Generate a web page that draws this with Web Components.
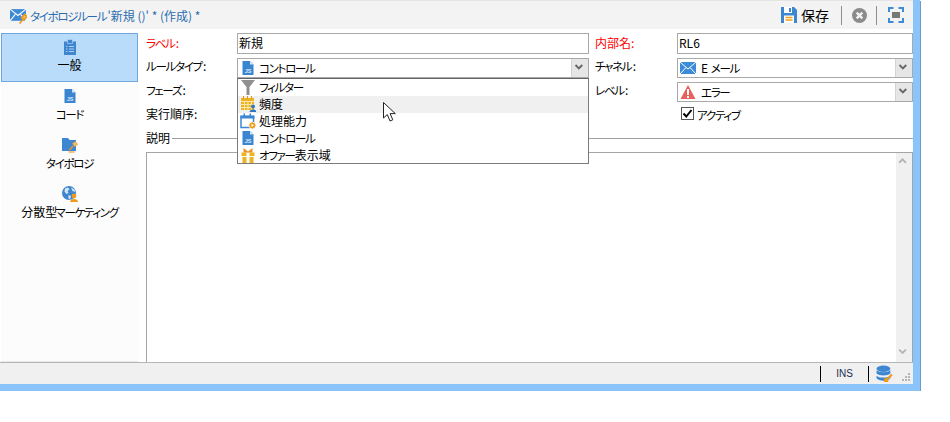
<!DOCTYPE html>
<html lang="ja">
<head>
<meta charset="utf-8">
<title>タイポロジルール</title>
<style>
	html, body { margin: 0; background: #fff; }
	body { font: 12px "Noto Sans CJK JP", "Liberation Sans", sans-serif; color: #000; }
</style>
</head>
<body>

<template id="app-window">
	<style>
		:host {
			display: block;
			width: 913px;
			height: 384px;
			border-right: 7px solid #8ac4fb;
			border-bottom: 7px solid #8ac4fb;
			box-shadow: 1px 1px 0 #6a9cc8;
			background: #fff;
		}
		.wrap { display: flex; flex-direction: column; height: 100%; }
		.body { flex: 1; display: flex; min-height: 0; padding-top: 4px; box-sizing: border-box; }
	</style>
	<div class="wrap">
		<slot name="title"></slot>
		<div class="body"><slot name="side"></slot><slot name="main"></slot></div>
		<slot name="status"></slot>
	</div>
</template>

<template id="app-titlebar">
	<style>
		:host {
			display: flex;
			align-items: center;
			height: 29px;
			padding: 0 9px 0 10px;
			box-sizing: border-box;
			border-top: 1px solid #e4e4e4;
			background: #f3f3f3;
		}
		.title { margin-left: 3px; color: #2b6cb0; font-size: 12px; white-space: nowrap; }
		.tools { margin-left: auto; display: flex; align-items: center; }
		.save { font-size: 14px; margin-left: 4px; }
		.sep { width: 1px; height: 19px; background: #8f8f8f; }
		.s1 { margin: 0 10px 0 12px; }
		.s2 { margin: 0 11px 0 9px; }
	</style>
	<app-icon name="mailrule" size="17"></app-icon>
	<span class="title"><slot></slot></span>
	<div class="tools">
		<app-icon name="save" size="16"></app-icon>
		<span class="save">保存</span>
		<span class="sep s1"></span>
		<app-icon name="cancel" size="15"></app-icon>
		<span class="sep s2"></span>
		<app-icon name="full" size="16"></app-icon>
	</div>
</template>

<template id="app-sidebar">
	<style>
		:host {
			display: block;
			width: 137px;
			margin-left: 1px;
			background: #fcfcfc;
			border-bottom: 1px solid #e6e9ee;
			box-sizing: border-box;
		}
	</style>
	<slot></slot>
</template>

<template id="app-navitem">
	<style>
		:host {
			display: flex;
			flex-direction: column;
			align-items: center;
			height: 49px;
			padding-top: 5px;
			box-sizing: border-box;
			font-size: 12px;
			line-height: 16px;
			gap: 2px;
			border: 1px solid transparent;
			white-space: nowrap;
		}
		:host([active]) { background: #b9dcfb; border-color: #6ea8dc; }
	</style>
	<app-icon></app-icon>
	<span><slot></slot></span>
</template>

<template id="app-form">
	<style>
		:host {
			display: flex;
			flex-direction: column;
			flex: 1;
			min-width: 0;
			margin-left: 8px;
			position: relative;
		}
		.grid {
			display: grid;
			grid-template-columns: 91px 352px 88px 236px;
			grid-template-rows: 21px 20px 20px 18px;
			row-gap: 4px;
			align-items: center;
		}
		.desc { display: flex; align-items: center; height: 16px; margin-top: 6px; }
		.desc span { padding-right: 2px; margin-bottom: 2px; }
		.desc i { flex: 1; height: 1px; background: #a0a0a0; }
		.box {
			flex: 1;
			margin-top: 6px;
			display: flex;
			justify-content: flex-end;
			border: 1px solid #a5a5a5;
			border-bottom-width: 0;
			background: #fff;
		}
		.bar {
			width: 16px;
			display: flex;
			flex-direction: column;
			justify-content: space-between;
			align-items: center;
			background: #f0f0f0;
			padding: 3px 0;
			box-sizing: border-box;
		}
		.drop { position: absolute; left: 91px; top: 45px; }
	</style>
	<div class="grid"><slot></slot></div>
	<div class="desc"><span>説明</span><i></i></div>
	<div class="box">
		<div class="bar">
			<app-icon name="up" size="12"></app-icon>
			<app-icon name="downlight" size="12"></app-icon>
		</div>
	</div>
	<div class="drop"><slot name="drop"></slot></div>
</template>

<template id="app-label">
	<style>
		:host { display: block; font-size: 12px; line-height: 16px; white-space: nowrap; padding-bottom: 2px; }
		:host([req]) { color: #f00; }
	</style>
	<slot></slot>
</template>

<template id="app-input">
	<style>
		:host {
			display: flex;
			align-items: center;
			height: 21px;
			padding: 0 0 2px 1px;
			box-sizing: border-box;
			border: 1px solid #a9a9a9;
			background: #fff;
			font-size: 12px;
		}
	</style>
	<slot></slot>
</template>

<template id="app-combo">
	<style>
		:host {
			display: flex;
			align-items: center;
			height: 20px;
			box-sizing: border-box;
			border: 1px solid #a9a9a9;
			background: #fff;
			font-size: 12px;
		}
		app-icon { margin: 0 var(--icon-gap, 5px) 0 2px; }
		.text { flex: 1; margin-bottom: 2px; }
		.btn {
			width: 17px;
			height: 100%;
			display: flex;
			align-items: center;
			justify-content: center;
			background: #e6e6e6;
			border-left: 1px solid #d4d4d4;
			box-sizing: border-box;
		}
		.btn app-icon { margin: 0; }
	</style>
	<app-icon></app-icon>
	<span class="text"><slot></slot></span>
	<span class="btn"><app-icon name="down" size="12"></app-icon></span>
</template>

<template id="app-dropdown">
	<style>
		:host {
			display: block;
			width: 352px;
			box-sizing: border-box;
			border: 1px solid #7a7a7a;
			border-top-color: #646464;
			background: #fff;
			height: 86px;
			overflow: hidden;
		}
	</style>
	<slot></slot>
</template>

<template id="app-option">
	<style>
		:host {
			display: flex;
			align-items: center;
			height: 17px;
			box-sizing: border-box;
			padding-bottom: 2px;
			font-size: 12px;
		}
		:host([hover]) { background: #f0f0f0; }
		app-icon { margin: 0 3px 0 2px; }
	</style>
	<app-icon size="16"></app-icon>
	<slot></slot>
</template>

<template id="app-check">
	<style>
		:host { display: flex; align-items: center; margin-left: 4px; font-size: 12px; gap: 3px; }
		.b {
			width: 11px; height: 11px;
			border: 1px solid #555;
			display: flex;
			background: #fff;
			margin-bottom: 3px;
		}
		.t { margin-bottom: 2px; letter-spacing: -.3px; }
	</style>
	<span class="b"><svg width="11" height="11" viewBox="0 0 11 11"><path d="M1.5 5.5l2.8 3 5.2-6.5" fill="none" stroke="#000" stroke-width="2"/></svg></span>
	<span class="t"><slot></slot></span>
</template>

<template id="app-statusbar">
	<style>
		:host {
			display: flex;
			align-items: center;
			height: 22px;
			box-sizing: border-box;
			border-top: 1px solid #b5b5b5;
			background: #f0f0f0;
			position: relative;
			font-size: 10px;
		}
		.sep { width: 1px; height: 16px; background: #000; }
		.a { margin-left: 820px; }
		.ins { width: 47px; text-align: center; font-family: "Liberation Sans", sans-serif; color: #1a2f50; }
		app-icon { margin-left: 7px; }
		.grip { position: absolute; right: 2px; bottom: 2px; }
	</style>
	<span class="sep a"></span>
	<span class="ins"><slot></slot></span>
	<span class="sep"></span>
	<app-icon name="db" size="17"></app-icon>
	<svg class="grip" width="9" height="9" viewBox="0 0 9 9" fill="#b5b5b5"><rect x="6" y="0" width="2" height="2"/><rect x="3" y="3" width="2" height="2"/><rect x="6" y="3" width="2" height="2"/><rect x="0" y="6" width="2" height="2"/><rect x="3" y="6" width="2" height="2"/><rect x="6" y="6" width="2" height="2"/></svg>
</template>

<template id="k-t">
	<style>
		:host {
			font-size: 11.5px;
			font-feature-settings: "palt";
			letter-spacing: -1.3px;
		}
	</style>
	<slot></slot>
</template>

<app-window>
	<app-titlebar slot="title"><k-t>タイポロジルール</k-t> '新規 ()' * (作成) *</app-titlebar>
	<app-sidebar slot="side">
		<app-navitem active icon="clip">一般</app-navitem>
		<app-navitem icon="js"><k-t>コード</k-t></app-navitem>
		<app-navitem icon="folder"><k-t>タイポロジ</k-t></app-navitem>
		<app-navitem icon="globe">分散型<k-t style="margin-left:-3px">マーケティング</k-t></app-navitem>
	</app-sidebar>
	<app-form slot="main">
		<app-label req><k-t>ラベル</k-t>:</app-label>
		<app-input>新規</app-input>
		<app-label req style="margin-left:6px">内部名:</app-label>
		<app-input>RL6</app-input>

		<app-label style="margin-top:-3px"><k-t>ルールタイプ</k-t>:</app-label>
		<app-combo icon="js" style="--icon-gap:3px"><k-t>コントロール</k-t></app-combo>
		<app-label style="margin:-3px 0 0 6px"><k-t>チャネル</k-t>:</app-label>
		<app-combo icon="mail">E <k-t>メール</k-t></app-combo>

		<app-label style="margin-top:-2px"><k-t>フェーズ</k-t>:</app-label>
		<span></span>
		<app-label style="margin:-2px 0 0 6px"><k-t>レベル</k-t>:</app-label>
		<app-combo icon="warn"><k-t>エラー</k-t></app-combo>

		<app-label>実行順序:</app-label>
		<span></span>
		<span></span>
		<app-check><k-t>アクティブ</k-t></app-check>

		<app-dropdown slot="drop">
			<app-option icon="filter"><k-t>フィルター</k-t></app-option>
			<app-option icon="cal" hover>頻度</app-option>
			<app-option icon="capacity">処理能力</app-option>
			<app-option icon="js"><k-t>コントロール</k-t></app-option>
			<app-option icon="gift"><k-t>オファー</k-t>表示域</app-option>
		</app-dropdown>
	</app-form>
	<app-statusbar slot="status">INS</app-statusbar>
</app-window>

<svg id="cursor" width="16" height="22" viewBox="0 0 16 22" style="position:absolute;left:383px;top:102px">
	<path d="M.5.5v15.500l3.800-3.400 2.700 6.400 2.800-1.200-2.700-6.200h5.200z" fill="#fff" stroke="#222" stroke-width="1"/>
</svg>

<script>
	const ICONS = {
		js: '<path d="M2.500 1h7.500l3.500 3.500V15h-11z" fill="#3b84d0"/><path d="M10 1l3.500 3.500H10z" fill="#d5e6f6"/><text x="8" y="13" font-size="5.500" font-weight="700" font-family="Liberation Sans" text-anchor="middle" fill="#dcebf8">JS</text>',
		clip: '<path d="M2 2.500h12V16H2z" fill="#3f86cf"/><path d="M5.500 .5h5V4.500h-5z" fill="#3f86cf" stroke="#b9dcfb" stroke-width=".6"/><path d="M4 7.500h1.500M7 7.500h5M4 10h1.500M7 10h5M4 12.500h1.500M7 12.500h5" stroke="#a9d0f2" fill="none"/>',
		folder: '<path d="M0 1h6l1.500 2H14v11H0z" fill="#3d87d2"/><path d="M10.500 6.500l3-2 2 3-3 2z" fill="#f0c070" stroke="#e8932a" stroke-width=".7"/><path d="M11 9l-3.500 4" stroke="#e8932a" stroke-width="1.500"/><path d="M6.500 15h6" stroke="#f0b050" stroke-width="1.500"/>',
		globe: '<circle cx="7" cy="7" r="7" fill="#3f86cf"/><path d="M3 2.500l3-1 1.500 2-2 1.500 1 2-2 1-2-2.500zM9 1.500l3.500 2 .5 2.500-2.500-1zM6.500 9l2.500 1-1 3.500-1.500-1z" fill="#d6e7f7"/><circle cx="12" cy="10" r="2.400" fill="#ee9a1c"/><path d="M8 16c0-4 8-4 8 0z" fill="#ee9a1c"/>',
		mailrule: '<path d="M0 2h15v11H0z" fill="#3d8bd6"/><path d="M0 2l7.500 6L15 2M0 13l5-6M15 13l-5-6" fill="none" stroke="#fff"/><path d="M11 10l3-3 2 2-3 3zM12 12l-3 3.500" stroke="#ee9a1c" stroke-width="1.500" fill="#f0c070"/>',
		mail: '<path d="M0 2h16v12H0z" fill="#3d8bd6"/><path d="M0 2l8 7 8-7M0 14l6-6.500M16 14l-6-6.500" fill="none" stroke="#fff"/>',
		warn: '<path d="M8 1l7.500 14H.5z" fill="#e8615c"/><path d="M7 5h2v6H7zM7 12h2v2H7z" fill="#fff"/>',
		filter: '<path d="M1 1h14L9.500 8V16h-3V8z" fill="#8f8f8f"/>',
		cal: '<path d="M1 2h13v12H1z" fill="#eeb320"/><path d="M3.500 0v3M7.500 0v3M11.500 0v3" stroke="#d99a10"/><path d="M1 5.500h13M4.500 5v9M8 5v9M11.500 5v9M1 8.500h13M1 11.500h13" stroke="#fbe7ae"/><circle cx="13" cy="10.500" r="2" fill="#2f78c0"/><path d="M9.500 16c0-3.500 7-3.500 7 0z" fill="#2f78c0"/>',
		capacity: '<path d="M1 3.500h12.500v11H1z" fill="#fff" stroke="#3d87d2" stroke-width="1.500"/><path d="M.5 2.500h14v3H.5zM3.500 .5h1.500v3H3.500zM9.500 .5h1.500v3H9.500z" fill="#3d87d2"/><circle cx="12.300" cy="12.300" r="3.600" fill="#fff"/><circle cx="12.300" cy="12.300" r="2" fill="none" stroke="#f0a020" stroke-width="1.800"/><path d="M12.300 8.800v7M8.800 12.300h7M9.800 9.800l5 5M14.800 9.800l-5 5" stroke="#f0a020" stroke-dasharray="1 5" stroke-dashoffset="-.2"/>',
		gift: '<path d="M1.500 5.500h13v3.500h-13zM2.500 10h11v6h-11z" fill="#eeb320"/><path d="M6.500 5.500h3V16h-3z" fill="#fff"/><path d="M3.500 1l4.500 3.500L12.500 1v4.500h-9z" fill="#e8932a"/>',
		save: '<path d="M0 0h13l3 3v13H0z" fill="#3d87d2"/><path d="M3 0h8v6H3z" fill="#fff"/><path d="M8 1h2v4H8z" fill="#3d87d2"/><path d="M3 8.500h10V16H3z" fill="#fff"/><path d="M4.500 10.500h7M4.500 13h7" stroke="#f0a020" stroke-width="1.500"/>',
		cancel: '<circle cx="8" cy="8" r="8" fill="#8b8b8b"/><path d="M5 5l6 6M11 5l-6 6" stroke="#f3f3f3" stroke-width="2.500"/>',
		full: '<path d="M1 5V1h4.500M10.500 1H15v4M15 11v4h-4.500M5.500 15H1v-4" fill="none" stroke="#3d8bd6" stroke-width="2"/><path d="M4 5h8v6H4z" fill="#777"/>',
		up: '<path d="M1.500 9l4.500-4.500L10.500 9" fill="none" stroke="#b5b5b5" stroke-width="2.500"/>',
		downlight: '<path d="M1.500 3.500L6 8l4.500-4.500" fill="none" stroke="#b5b5b5" stroke-width="2.500"/>',
		down: '<path d="M2 4l4.500 4.500L11 4" fill="none" stroke="#666" stroke-width="2.500"/>',
		db: '<ellipse cx="7" cy="3.500" rx="6.500" ry="3" fill="#3d87d2"/><path d="M.5 5c2 2.500 11 2.500 13 0v3c-2 2.500-11 2.500-13 0zM.5 10c2 2.500 11 2.500 13 0v2.500c-2 3-11 3-13 0z" fill="#3d87d2"/><path d="M9 15l6-6" stroke="#ee9a1c" stroke-width="2"/><circle cx="9.500" cy="14.500" r="2.200" fill="#ee9a1c"/>'
	};

	class AppElement extends HTMLElement {
		constructor() {
			super();
			let template = document.getElementById(this.constructor.templateId);
			this.attachShadow({ mode: "open" });
			this.shadowRoot.appendChild(template.content.cloneNode(true));
			let inner = this.shadowRoot.querySelector('app-icon:not([name])');
			if (inner) {
				inner.setAttribute('name', this.getAttribute('icon'));
			}
		}
	}

	class AppIcon extends HTMLElement {
		static observedAttributes = ['name'];

		constructor() {
			super();
			this.attachShadow({ mode: "open" });
		}

		attributeChangedCallback() {
			let size = this.getAttribute('size') || 16;
			this.shadowRoot.innerHTML = `<style>:host{display:inline-flex;flex:none;}</style>
				<svg width="${size}" height="${size}" viewBox="0 0 16 16">${ICONS[this.getAttribute('name')] || ''}</svg>`;
		}
	}
	customElements.define('app-icon', AppIcon);

	const tags = ['app-window', 'app-titlebar', 'app-sidebar', 'app-navitem', 'app-form', 'app-label',
		'app-input', 'app-combo', 'app-dropdown', 'app-option', 'app-check', 'app-statusbar', 'k-t'];
	for (let tag of tags) {
		customElements.define(tag, class extends AppElement {
			static templateId = tag;
		});
	}
</script>
</body>
</html>
